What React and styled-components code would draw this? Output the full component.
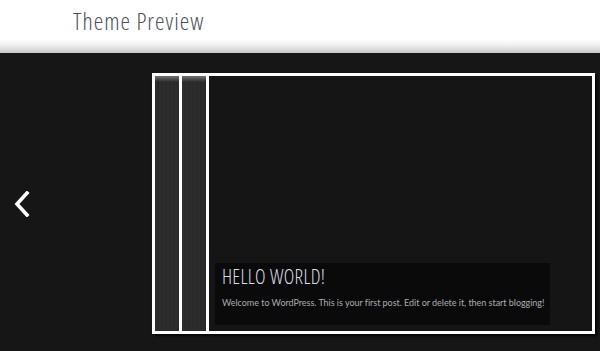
import React from "react";
import styled, { createGlobalStyle } from "styled-components";

const Global = createGlobalStyle`
  html, body { margin: 0; padding: 0; background: #161616; }
  body { font-family: "Open Sans", "Lato", sans-serif; overflow: hidden; }
`;

const Page = styled.div`
  width: 600px;
  height: 351px;
  display: flex;
  flex-direction: column;
`;

const Header = styled.header`
  height: 53px;
  flex: none;
  box-sizing: border-box;
  padding: 5px 0 0 73px;
  background: linear-gradient(to bottom, #ffffff 0%, #ffffff 74%, #eeeeee 86%, #c8c8c8 100%);
`;

const Title = styled.h1`
  margin: 0;
  font-family: "Open Sans", sans-serif;
  font-stretch: 75%;
  font-weight: 300;
  font-size: 24px;
  letter-spacing: 1px;
  line-height: 32px;
  color: #4a4f57;
`;

const Stage = styled.main`
  flex: 1;
  background: #161616;
  display: flex;
  align-items: flex-start;
  padding-top: 20px;
`;

const NavColumn = styled.div`
  width: 152px;
  height: 261px;
  flex: none;
  display: flex;
  align-items: center;
  padding-left: 14px;
  box-sizing: border-box;
`;

const NavButton = styled.button`
  background: none;
  border: 0;
  padding: 0;
  display: flex;
  cursor: pointer;
`;

const Frame = styled.div`
  width: 443px;
  height: 261px;
  flex: none;
  box-sizing: border-box;
  border: 3px solid #fff;
  display: flex;
  box-shadow: 2px 2px 2px rgba(0, 0, 0, 0.8);
`;

const Slice = styled.div`
  width: 24px;
  flex: none;
  background:
    linear-gradient(to bottom, rgba(255,255,255,0.35), rgba(255,255,255,0) 6px),
    repeating-linear-gradient(to right, #2c2c2c 0 2px, #2a2a2a 2px 4px);
  border-right: 3px solid #fff;
`;

const Slide = styled.div`
  flex: 1;
  min-width: 0;
  background: #151515;
  display: flex;
  flex-direction: column;
  justify-content: flex-end;
  padding: 0 42px 6px 6px;
`;

const Caption = styled.div`
  background: #0a0a0a;
  height: 62px;
  box-sizing: border-box;
  padding: 1px 7px 0 7px;
  overflow: hidden;
`;

const PostTitle = styled.h2`
  margin: 0;
  font-family: "Open Sans", sans-serif;
  font-stretch: 75%;
  font-weight: 300;
  font-size: 20px;
  letter-spacing: 0.3px;
  line-height: 26px;
  color: #d8dce4;
`;

const PostText = styled.p`
  margin: 7px 0 0;
  font-family: "Lato", sans-serif;
  font-size: 9px;
  letter-spacing: -0.03px;
  line-height: 12px;
  color: #a8acb2;
  white-space: nowrap;
`;

const Chevron = () => (
  <svg width="16" height="26" viewBox="0 0 16 26">
    <polyline
      points="13,2 3,13 13,24"
      fill="none"
      stroke="#fff"
      strokeWidth="3.6"
      strokeLinecap="square"
      strokeLinejoin="miter"
    />
  </svg>
);

export default function App() {
  return (
    <>
      <Global />
      <Page>
        <Header>
          <Title>Theme Preview</Title>
        </Header>
        <Stage>
          <NavColumn>
            <NavButton aria-label="Previous">
              <Chevron />
            </NavButton>
          </NavColumn>
          <Frame>
            <Slice />
            <Slice />
            <Slide>
              <Caption>
                <PostTitle>HELLO WORLD!</PostTitle>
                <PostText>
                  Welcome to WordPress. This is your first post. Edit or delete it, then start blogging!
                </PostText>
              </Caption>
            </Slide>
          </Frame>
        </Stage>
      </Page>
    </>
  );
}
